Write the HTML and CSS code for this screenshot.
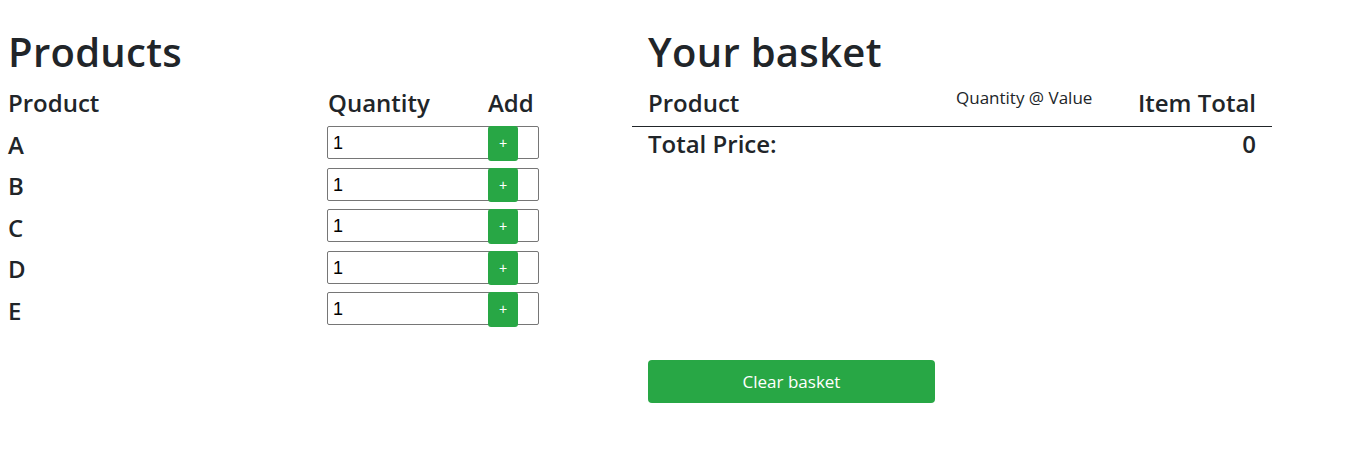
FILE: index.html
```html
<!DOCTYPE html>
<html lang="en">
<head>
<meta charset="utf-8">
<title>Shop</title>
<link rel="stylesheet" href="styles.css">
</head>
<body>
<div class="page">
  <section class="products">
    <h1 class="title">Products</h1>
    <div class="prow head">
      <div class="cell">Product</div>
      <div class="cell">Quantity</div>
      <div class="cell">Add</div>
    </div>
    <div class="prow">
      <div class="cell">A</div>
      <div class="cell"><input class="qty" type="number" value="1"></div>
      <div class="cell"><button class="add">+</button></div>
    </div>
    <div class="prow">
      <div class="cell">B</div>
      <div class="cell"><input class="qty" type="number" value="1"></div>
      <div class="cell"><button class="add">+</button></div>
    </div>
    <div class="prow">
      <div class="cell">C</div>
      <div class="cell"><input class="qty" type="number" value="1"></div>
      <div class="cell"><button class="add">+</button></div>
    </div>
    <div class="prow">
      <div class="cell">D</div>
      <div class="cell"><input class="qty" type="number" value="1"></div>
      <div class="cell"><button class="add">+</button></div>
    </div>
    <div class="prow">
      <div class="cell">E</div>
      <div class="cell"><input class="qty" type="number" value="1"></div>
      <div class="cell"><button class="add">+</button></div>
    </div>
  </section>
  <section class="basket">
    <h1 class="title">Your basket</h1>
    <div class="brow head">
      <div class="cell">Product</div>
      <div class="cell small">Quantity @ Value</div>
      <div class="cell right">Item Total</div>
    </div>
    <hr class="rule">
    <div class="brow total">
      <div class="cell">Total Price:</div>
      <div class="cell right">0</div>
    </div>
    <button class="clear">Clear basket</button>
  </section>
</div>
</body>
</html>
```
FILE: styles.css
```css
* { box-sizing: border-box; }
body {
  margin: 0;
  padding: 0 8px;
  font-family: "Open Sans", "Noto Sans", sans-serif;
  color: #212529;
  background: #fff;
}
.page {
  display: flex;
  align-items: flex-start;
}
.products {
  width: 624px;
  flex: none;
}
.basket {
  width: 640px;
  flex: none;
  padding: 0 16px;
}
.title {
  font-size: 40px;
  font-weight: 600;
  line-height: 48px;
  margin: 28px 0 8px;
  letter-spacing: 0.3px;
}
.prow {
  display: grid;
  grid-template-columns: 320px 160px 60px;
  height: 41.5px;
  align-items: center;
  font-size: 24px;
  font-weight: 600;
}
.prow .cell:first-child { padding-top: 3px; }
.prow.head {
  height: 38px;
  align-items: start;
  padding-top: 2px;
}
.prow.head .cell:first-child { padding-top: 0; }
.qty {
  display: block;
  width: 212px;
  height: 33px;
  margin-left: -1px;
  border: 1px solid #767676;
  border-radius: 2px;
  padding: 2px 5px 0;
  font-family: "Liberation Sans", Arial, sans-serif;
  font-size: 18px;
  color: #000;
  -moz-appearance: textfield;
}
.qty::-webkit-inner-spin-button,
.qty::-webkit-outer-spin-button { -webkit-appearance: none; margin: 0; }
.add {
  display: block;
  width: 30px;
  height: 34.5px;
  margin-top: 1px;
  border: none;
  border-radius: 3px;
  background: #28a745;
  color: #fff;
  font-size: 14px;
  padding: 0;
  position: relative;
}
.brow {
  display: grid;
  grid-template-columns: 1fr 140px 160px;
  font-size: 24px;
  font-weight: 600;
  align-items: start;
}
.brow.head { height: 42px; padding-top: 2px; }
.brow .small {
  font-size: 17px;
  font-weight: 400;
  line-height: 24px;
}
.brow .right { text-align: right; }
.brow.total { grid-template-columns: 1fr 160px; height: 233px; padding-top: 0; }
.rule {
  margin: 0 -16px;
  border: none;
  border-top: 1px solid #212529;
  height: 0;
}
.clear {
  display: block;
  width: 287px;
  height: 43px;
  border: none;
  border-radius: 4px;
  background: #28a745;
  color: #fff;
  font-family: inherit;
  font-size: 17px;
}
```
